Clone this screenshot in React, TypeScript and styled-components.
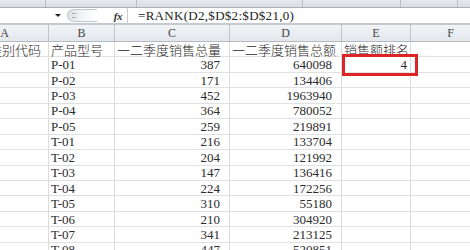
import React from 'react';
import styled, { createGlobalStyle } from 'styled-components';

const Global = createGlobalStyle`
  html, body { margin: 0; padding: 0; background: #fff; overflow: hidden; }
  #root { width: 470px; height: 250px; }
`;

const Window = styled.div`
  position: relative;
  width: 470px;
  height: 250px;
  overflow: hidden;
  display: flex;
  flex-direction: column;
  background: #fff;
  font-family: "Liberation Serif", "Noto Sans CJK SC", serif;
  color: #2a2a2a;
`;

const RibbonEdge = styled.div`
  height: 7px;
  flex-shrink: 0;
  display: flex;
  background: linear-gradient(#e6e9ee, #d9dde3);
  border-bottom: 1px solid #a9b0b9;
`;

const RibbonGroup = styled.div<{ $w: number }>`
  width: ${(p) => p.$w}px;
  flex-shrink: 0;
  border-right: 1px solid #b7bec7;
`;

const FormulaBar = styled.div`
  height: 15px;
  flex-shrink: 0;
  display: flex;
  align-items: stretch;
  background: #fff;
  border-bottom: 2px solid #c4c9cf;
`;

const NameBox = styled.div`
  width: 64px;
  flex-shrink: 0;
  display: flex;
  align-items: center;
  justify-content: flex-end;
  padding-right: 3px;
  box-sizing: border-box;
`;

const DropArrow = styled.span`
  width: 0;
  height: 0;
  border-left: 3px solid transparent;
  border-right: 3px solid transparent;
  border-top: 3px solid #222;
`;

const ToolArea = styled.div`
  width: 64px;
  flex-shrink: 0;
  display: flex;
  align-items: center;
  justify-content: space-between;
  padding: 0 5px 0 3px;
  box-sizing: border-box;
  border-right: 1px solid #c9cdd2;
`;

const Grip = styled.div`
  width: 30px;
  height: 13px;
  border-radius: 7px 0 0 7px;
  border: 1px solid #c3c8ce;
  border-right: none;
  background: linear-gradient(90deg, #dde1e6, #f3f4f6 50%, #fff);
  display: flex;
  align-items: center;
  padding-left: 4px;
  box-sizing: border-box;
`;

const GripMark = styled.span`
  width: 4px;
  height: 3px;
  border-top: 1px solid #a9afb6;
  border-bottom: 1px solid #a9afb6;
`;

const Fx = styled.span`
  font-family: "Liberation Serif", serif;
  font-style: italic;
  font-size: 11px;
  font-weight: bold;
  color: #333;
  letter-spacing: -0.5px;
`;

const FormulaText = styled.div`
  flex: 1;
  display: flex;
  align-items: center;
  padding-left: 10px;
  font-size: 13px;
  letter-spacing: 0.3px;
  color: #222;
  white-space: nowrap;
`;

const Sheet = styled.div`
  margin-left: -39px;
  display: grid;
  grid-template-columns: 88px 66px 115px 112px 69px 80px;
  grid-template-rows: 17px;
  grid-auto-rows: 15.45px;
`;

const ColHead = styled.div`
  box-sizing: border-box;
  display: flex;
  align-items: center;
  justify-content: center;
  font-size: 12px;
  color: #444;
  background: linear-gradient(#f1f3f6, #e3e7ec);
  border-right: 1px solid #c0c5cc;
  border-bottom: 1px solid #b5bbc3;
`;

const Cell = styled.div<{ $align?: 'left' | 'right'; $pr?: number; $cjk?: boolean }>`
  box-sizing: border-box;
  display: flex;
  align-items: center;
  justify-content: ${(p) => (p.$align === 'right' ? 'flex-end' : 'flex-start')};
  padding-left: 2px;
  padding-right: ${(p) => p.$pr ?? 3}px;
  border-right: 1px solid #d9dbdd;
  border-bottom: 1px solid #dfe1e3;
  font-family: ${(p) =>
    p.$cjk ? '"Noto Sans CJK SC", sans-serif' : '"Liberation Serif", "Noto Sans CJK SC", serif'};
  font-size: 13px;
  font-weight: ${(p) => (p.$cjk ? 300 : 400)};
  color: #2b2b2b;
  white-space: nowrap;
  overflow: visible;
  line-height: 1;
`;

const Highlight = styled.div`
  position: absolute;
  left: 342px;
  top: 54px;
  width: 76px;
  height: 22px;
  box-sizing: border-box;
  border: 3px solid #dd2429;
  pointer-events: none;
`;

const rows: [string, string, string, string][] = [
  ['P-01', '387', '640098', '4'],
  ['P-02', '171', '134406', ''],
  ['P-03', '452', '1963940', ''],
  ['P-04', '364', '780052', ''],
  ['P-05', '259', '219891', ''],
  ['T-01', '216', '133704', ''],
  ['T-02', '204', '121992', ''],
  ['T-03', '147', '136416', ''],
  ['T-04', '224', '172256', ''],
  ['T-05', '310', '55180', ''],
  ['T-06', '210', '304920', ''],
  ['T-07', '341', '213125', ''],
  ['T-08', '447', '520851', ''],
];

export default function App() {
  return (
    <>
      <Global />
      <Window>
        <RibbonEdge>
          <RibbonGroup $w={45} />
          <RibbonGroup $w={90} />
          <RibbonGroup $w={165} />
          <RibbonGroup $w={97} />
          <RibbonGroup $w={56} />
        </RibbonEdge>
        <FormulaBar>
          <NameBox>
            <DropArrow />
          </NameBox>
          <ToolArea>
            <Grip>
              <GripMark />
            </Grip>
            <Fx>fx</Fx>
          </ToolArea>
          <FormulaText>=RANK(D2,$D$2:$D$21,0)</FormulaText>
        </FormulaBar>
        <Sheet>
          {['A', 'B', 'C', 'D', 'E', 'F'].map((c) => (
            <ColHead key={c}>{c}</ColHead>
          ))}
          <Cell $cjk>产品类别代码</Cell>
          <Cell $cjk>产品型号</Cell>
          <Cell $cjk>一二季度销售总量</Cell>
          <Cell $cjk>一二季度销售总额</Cell>
          <Cell $cjk>销售额排名</Cell>
          <Cell />
          {rows.map((r) => (
            <React.Fragment key={r[0]}>
              <Cell />
              <Cell>{r[0]}</Cell>
              <Cell $align="right" $pr={9}>{r[1]}</Cell>
              <Cell $align="right" $pr={9}>{r[2]}</Cell>
              <Cell $align="right" $pr={3}>{r[3]}</Cell>
              <Cell />
            </React.Fragment>
          ))}
        </Sheet>
        <Highlight />
      </Window>
    </>
  );
}
